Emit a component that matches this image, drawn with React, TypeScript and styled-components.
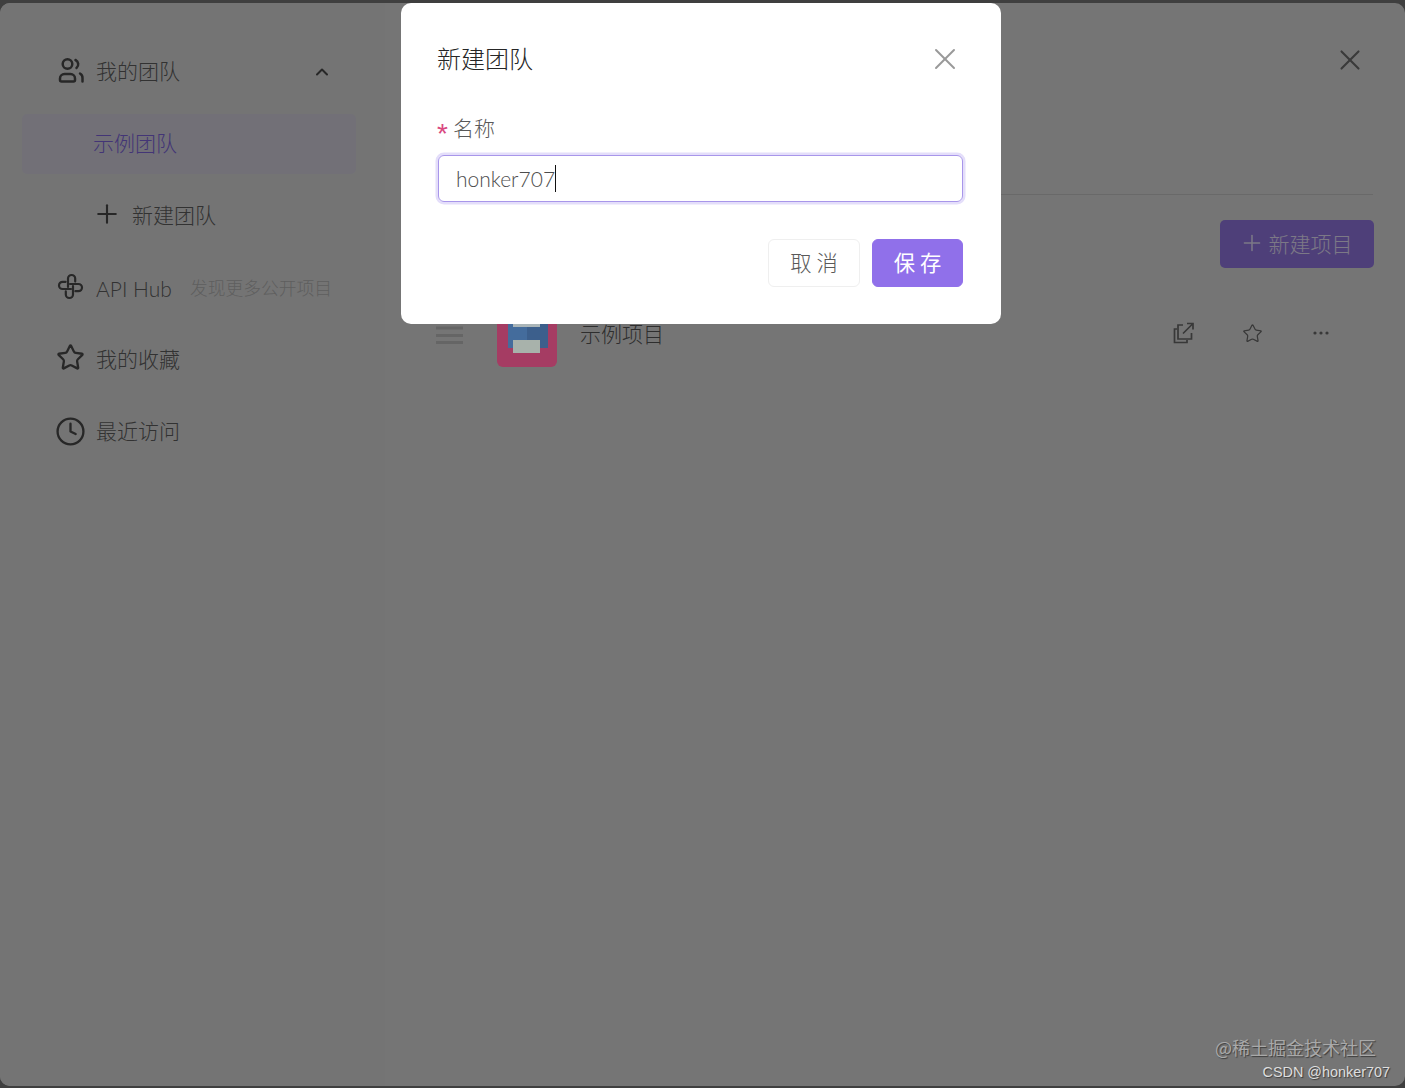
import React from 'react';
import styled, { createGlobalStyle } from 'styled-components';
import { ChevronUp, Clock, Plus, Star, X } from 'lucide-react';

const GlobalStyle = createGlobalStyle`
  html, body {
    margin: 0;
    padding: 0;
  }
  body {
    font-family: Lato, "Noto Sans CJK SC", sans-serif;
    font-weight: 300;
    background: #737373;
  }
`;

const Page = styled.div`
  position: relative;
  height: 1088px;
  overflow: hidden;
  padding-top: 3px;
  box-sizing: border-box;
  background: #737373;
`;

const Sheet = styled.div`
  display: flex;
  height: 1083px;
  border-radius: 10px;
  overflow: hidden;
  background: #d6d6d6;
`;

const Sidebar = styled.nav`
  width: 385px;
  flex: none;
  box-sizing: border-box;
  padding: 39px 29px 0 22px;
  display: flex;
  flex-direction: column;
  gap: 12px;
  background: #d4d4d4;
`;

const NavRow = styled.div<{ $active?: boolean; $indent?: number }>`
  height: 60px;
  box-sizing: border-box;
  padding-bottom: 4px;
  display: flex;
  align-items: center;
  gap: 12px;
  padding-left: ${p => p.$indent ?? 35}px;
  border-radius: 5px;
  font-size: 21px;
  color: ${p => (p.$active ? '#7a62d8' : '#5c5c5c')};
  background: ${p => (p.$active ? '#cfcdd9' : 'transparent')};
  svg {
    flex: none;
    color: #474747;
  }
`;

const Chevron = styled.span`
  margin: 3px 24px 0 auto;
  display: flex;
`;

const AddRow = styled(NavRow)`
  gap: 10px;
`;

const HubLabel = styled.span`
  margin-top: 4px;
`;

const Hint = styled.span`
  font-size: 17.8px;
  margin: 2px 0 0 6px;
  color: #acacac;
`;

const NavStar = styled(Star)`
  margin: -1px -1px 0;
`;

const NavClock = styled(Clock)`
  margin: 2px -2px 0;
`;

const Main = styled.main`
  flex: 1;
  min-width: 0;
  box-sizing: border-box;
  padding: 0 32px 0 47px;
`;

const Header = styled.header`
  height: 192px;
  box-sizing: border-box;
  padding: 40px 6px 0 0;
  display: flex;
  justify-content: flex-end;
  align-items: flex-start;
  border-bottom: 1px solid #c0c0c0;
  color: #6a6a6a;
`;

const Toolbar = styled.div`
  display: flex;
  justify-content: flex-end;
  padding-top: 25px;
  margin-right: -1px;
`;

const NewProject = styled.button`
  width: 154px;
  height: 48px;
  box-sizing: border-box;
  padding: 0 3px 2px 0;
  display: flex;
  align-items: center;
  justify-content: center;
  gap: 4px;
  border: 0;
  border-radius: 5px;
  background: #8e74dc;
  color: #e2dcf5;
  font: inherit;
  font-size: 21px;
`;

const ProjectRow = styled.div`
  margin-top: 39px;
  display: flex;
  align-items: center;
  padding: 0 40px 0 4px;
  height: 60px;
`;

const Handle = styled.svg`
  flex: none;
  margin: 0 34px 5px 0;
`;

const ProjectIcon = styled.svg`
  flex: none;
  position: relative;
  z-index: 11;
  margin-right: 23px;
  border-radius: 6px;
  filter: blur(0.7px);
`;

const ProjectName = styled.span`
  font-size: 21px;
  color: #555;
  margin-bottom: 8px;
`;

const Actions = styled.div`
  margin: 0 0 8px auto;
  display: flex;
  gap: 44.5px;
  color: #666;
`;

const Action = styled.span`
  width: 24px;
  height: 24px;
  display: flex;
  align-items: center;
  justify-content: center;
`;

const Mask = styled.div`
  position: absolute;
  inset: 0;
  z-index: 10;
  background: rgba(0, 0, 0, 0.45);
`;

const Modal = styled.section`
  position: absolute;
  z-index: 20;
  top: 3px;
  left: 401px;
  width: 600px;
  height: 321px;
  box-sizing: border-box;
  padding: 36px 38px 37px 36px;
  display: flex;
  flex-direction: column;
  border-radius: 10px;
  background: #fff;
`;

const ModalHead = styled.div`
  display: flex;
  justify-content: space-between;
  align-items: center;
  height: 40px;
`;

const ModalTitle = styled.h2`
  margin: 0;
  padding-bottom: 4px;
  font-size: 24px;
  font-weight: 300;
  color: #262626;
`;

const ModalClose = styled.span`
  display: flex;
  color: #999;
`;

const FieldLabel = styled.label`
  margin-top: 32px;
  display: flex;
  align-items: center;
  height: 32px;
  font-size: 21px;
  color: #595959;
`;

const Required = styled.span`
  width: 16px;
  height: 32px;
  line-height: 46px;
  color: #d9487f;
  font-size: 28px;
  font-family: "Liberation Sans", sans-serif;
`;

const Field = styled.div`
  margin: 12px 0 0 1px;
  height: 47px;
  box-sizing: border-box;
  padding: 0 17px;
  display: flex;
  align-items: center;
  border: 1.5px solid #a896ea;
  border-radius: 6px;
  box-shadow: 0 0 0 2.5px #e4defa;
  font-size: 21px;
  color: #4d4d4d;
`;

const Caret = styled.span`
  width: 1px;
  height: 27px;
  background: #111;
`;

const Footer = styled.div`
  margin-top: auto;
  display: flex;
  justify-content: flex-end;
  gap: 12px;
`;

const Button = styled.button<{ $primary?: boolean }>`
  width: ${p => (p.$primary ? 91 : 92)}px;
  height: 48px;
  box-sizing: border-box;
  border: 1px solid ${p => (p.$primary ? '#9070ea' : '#efefef')};
  border-radius: 6px;
  background: ${p => (p.$primary ? '#9070ea' : '#fff')};
  color: ${p => (p.$primary ? '#fff' : '#595959')};
  font: inherit;
  font-size: 21.3px;
  font-weight: ${p => (p.$primary ? 400 : 300)};
  letter-spacing: 5px;
  text-indent: 5px;
  padding: 0 0 4px;
`;

const Watermark = styled.div`
  position: absolute;
  z-index: 30;
  right: 15px;
  bottom: 6px;
  display: flex;
  flex-direction: column;
  align-items: flex-end;
  text-shadow: 1px 1px 1px #3d3d3d;
`;

const WatermarkCn = styled.span`
  font-family: "Noto Sans CJK SC", sans-serif;
  font-size: 18px;
  font-weight: 400;
  line-height: 30px;
  padding-right: 14px;
  color: #a9a9a9;
`;

const WatermarkEn = styled.span`
  font-family: "Liberation Sans", sans-serif;
  font-size: 14.4px;
  font-weight: 400;
  line-height: 20px;
  color: #dedede;
`;

const TeamIcon = () => (
  <svg width="27" height="27" viewBox="0 0 27 27" fill="none" stroke="currentColor" strokeWidth="2.5" strokeLinecap="round">
    <circle cx="10.5" cy="7" r="4.800" />
    <path d="M3.500 24.500h13a1.500 1.500 0 0 0 1.500-1.500v-1.500a4.500 4.500 0 0 0-4.500-4.500h-6a4.500 4.500 0 0 0-4.500 4.500V23a1.500 1.500 0 0 0 1.500 1.500z" />
    <path d="M18.500 3a4.800 4.800 0 0 1 1 8" />
    <path d="M23 16.500a5 5 0 0 1 2.500 4.500v3.500" />
  </svg>
);

const HubIcon = () => (
  <svg width="27" height="27" viewBox="0 0 27 27" fill="none" stroke="currentColor" strokeWidth="2.2" strokeLinecap="round">
    <path d="M11 14V5.600a3.600 3.600 0 0 1 7.200 0v3" />
    <path d="M13 11h8.400a3.600 3.600 0 0 1 0 7.200h-3" />
    <path d="M16 13v8.400a3.600 3.600 0 0 1-7.200 0v-3" />
    <path d="M14 16H5.600a3.600 3.600 0 0 1 0-7.200h3" />
  </svg>
);

const ShareIcon = () => (
  <svg width="22" height="22" viewBox="0 0 22 22" fill="none" stroke="currentColor" strokeWidth="1.7">
    <path d="M4 7H1.500v13.500H14V18" />
    <path d="M10 3H5v14h13.500v-6" />
    <path d="M10 11.500L20 1.500M14 1.500h6v6" />
  </svg>
);

const MoreIcon = () => (
  <svg width="16" height="4" viewBox="0 0 16 4" fill="currentColor">
    <circle cx="2" cy="2" r="1.600" />
    <circle cx="8" cy="2" r="1.600" />
    <circle cx="14" cy="2" r="1.600" />
  </svg>
);

const App: React.FC = () => (
  <Page>
    <GlobalStyle />
    <Sheet>
      <Sidebar>
        <NavRow>
          <TeamIcon />
          <span>我的团队</span>
          <Chevron>
            <ChevronUp size={20} strokeWidth={2.4} />
          </Chevron>
        </NavRow>
        <NavRow $active $indent={71}>
          <span>示例团队</span>
        </NavRow>
        <AddRow $indent={70}>
          <Plus size={30} strokeWidth={1.7} />
          <span>新建团队</span>
        </AddRow>
        <NavRow>
          <HubIcon />
          <HubLabel>API Hub</HubLabel>
          <Hint>发现更多公开项目</Hint>
        </NavRow>
        <NavRow>
          <NavStar size={29} strokeWidth={1.9} />
          <span>我的收藏</span>
        </NavRow>
        <NavRow>
          <NavClock size={31} strokeWidth={1.8} />
          <span>最近访问</span>
        </NavRow>
      </Sidebar>
      <Main>
        <Header>
          <X size={34} strokeWidth={1.5} />
        </Header>
        <Toolbar>
          <NewProject>
            <Plus size={26} strokeWidth={1.4} />
            <span>新建项目</span>
          </NewProject>
        </Toolbar>
        <ProjectRow>
          <Handle width="27" height="18" viewBox="0 0 27 18" fill="#b8b8b8">
            <rect y="0.5" width="27" height="3" />
            <rect y="8" width="27" height="3" />
            <rect y="15" width="27" height="3" />
          </Handle>
          <ProjectIcon width="60" height="60" viewBox="0 0 60 60">
            <rect width="60" height="60" fill="#a53c63" />
            <rect x="11" y="5" width="19" height="36" fill="#446c9c" />
            <rect x="30" y="5" width="21" height="36" fill="#3c5f8c" />
            <rect x="16" y="12" width="27" height="8" fill="#aab5b8" />
            <rect x="16" y="33" width="27" height="13" fill="#a8b2ab" />
          </ProjectIcon>
          <ProjectName>示例项目</ProjectName>
          <Actions>
            <Action>
              <ShareIcon />
            </Action>
            <Action>
              <Star size={21} strokeWidth={1.4} />
            </Action>
            <Action>
              <MoreIcon />
            </Action>
          </Actions>
        </ProjectRow>
      </Main>
    </Sheet>
    <Mask />
    <Modal>
      <ModalHead>
        <ModalTitle>新建团队</ModalTitle>
        <ModalClose>
          <X size={36} strokeWidth={1.3} />
        </ModalClose>
      </ModalHead>
      <FieldLabel>
        <Required>*</Required>
        名称
      </FieldLabel>
      <Field>
        honker707
        <Caret />
      </Field>
      <Footer>
        <Button>取消</Button>
        <Button $primary>保存</Button>
      </Footer>
    </Modal>
    <Watermark>
      <WatermarkCn>@稀土掘金技术社区</WatermarkCn>
      <WatermarkEn>CSDN @honker707</WatermarkEn>
    </Watermark>
  </Page>
);

export default App;
